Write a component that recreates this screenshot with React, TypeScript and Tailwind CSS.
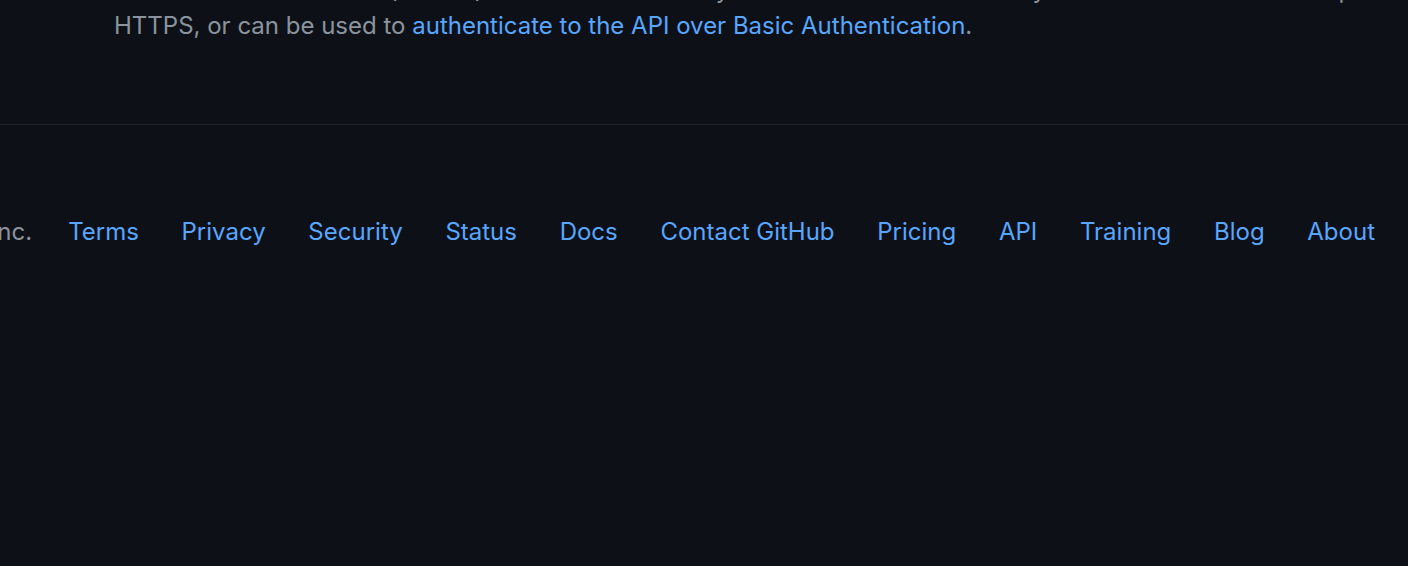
import React from 'react';

const links = ['Terms', 'Privacy', 'Security', 'Status', 'Docs', 'Contact GitHub', 'Pricing', 'API', 'Training', 'Blog', 'About'];

export default function App() {
  return (
    <div className="w-[1408px] h-[566px] overflow-hidden bg-[#0d1117] font-['Inter',sans-serif]">
      <div className="pl-[114px] pb-[80px]">
        <p className="-mt-[28px] text-[24px] leading-[36px] text-[#8b949e] whitespace-nowrap">
          Personal access tokens (classic) function like ordinary OAuth access tokens. They can be used instead of a password for Git over
          <br />
          HTTPS, or can be used to{' '}
          <a href="#" className="text-[#58a6ff]">authenticate to the API over Basic Authentication</a>.
        </p>
      </div>
      <footer className="border-t border-[#21262d]">
        <div className="flex justify-end items-center gap-[36px] pr-[33px] pt-[89px] text-[24px] leading-[36px] whitespace-nowrap">
          <span className="text-[#8b949e]">© 2023 GitHub, Inc.</span>
          <ul className="flex items-center gap-[42.7px]">
            {links.map((l) => (
              <li key={l}>
                <a href="#" className="text-[#58a6ff]">{l}</a>
              </li>
            ))}
          </ul>
        </div>
      </footer>
    </div>
  );
}
